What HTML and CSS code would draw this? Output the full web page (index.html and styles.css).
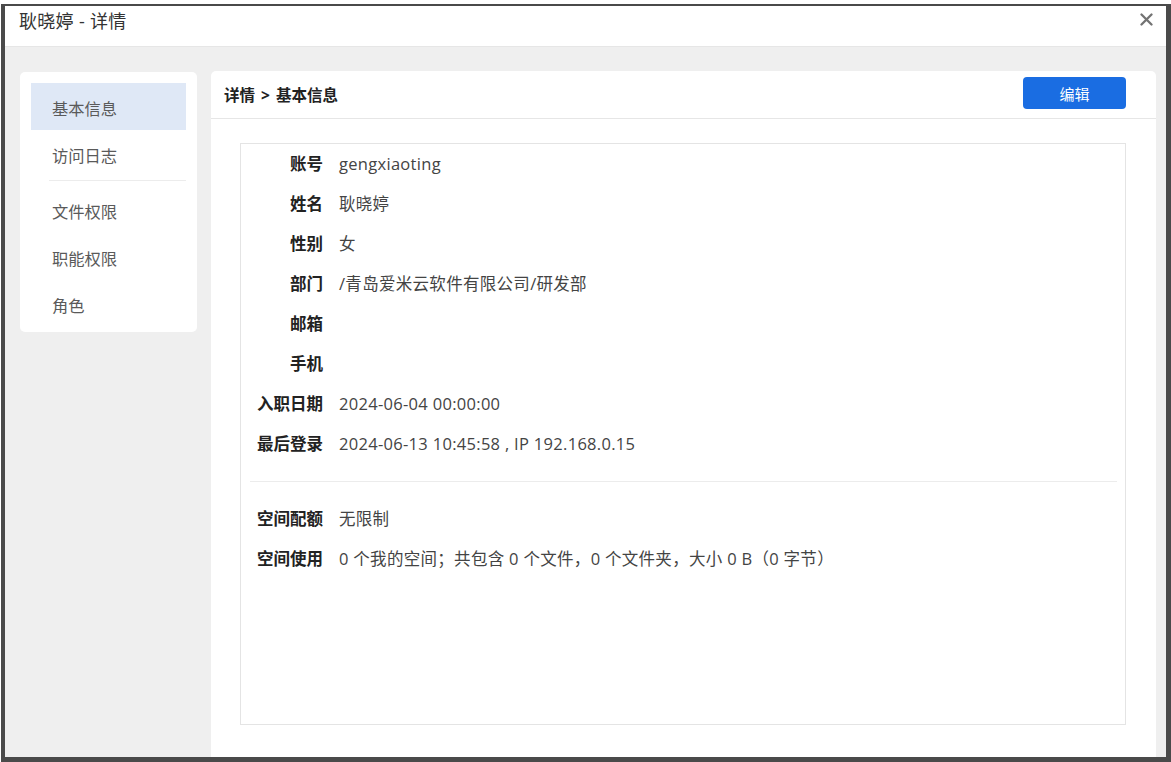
FILE: index.html
```html
<!DOCTYPE html>
<html lang="zh-CN">
<head>
<meta charset="utf-8">
<title>耿晓婷 - 详情</title>
<link rel="stylesheet" href="styles.css">
</head>
<body>
<div class="frame">
  <div class="dlg-head">
    <div class="dlg-title">耿晓婷 - 详情</div>
    <svg class="dlg-close" width="13" height="13" viewBox="0 0 13 13"><path d="M1.5 1.5 L11.5 11.5 M11.5 1.5 L1.5 11.5" stroke="#737373" stroke-width="2.3" stroke-linecap="round"/></svg>
  </div>
  <div class="dlg-body">
    <div class="side">
      <div class="nav-item active">基本信息</div>
      <div class="nav-item">访问日志</div>
      <div class="nav-sep"></div>
      <div class="nav-item">文件权限</div>
      <div class="nav-item">职能权限</div>
      <div class="nav-item">角色</div>
    </div>
    <div class="main">
      <div class="main-head">
        <div class="crumb">详情<span class="arrow">&gt;</span>基本信息</div>
        <button class="btn-edit">编辑</button>
      </div>
      <div class="info-box">
        <div class="row"><div class="lbl">账号</div><div class="val">gengxiaoting</div></div>
        <div class="row"><div class="lbl">姓名</div><div class="val">耿晓婷</div></div>
        <div class="row"><div class="lbl">性别</div><div class="val">女</div></div>
        <div class="row"><div class="lbl">部门</div><div class="val">/青岛爱米云软件有限公司/研发部</div></div>
        <div class="row"><div class="lbl">邮箱</div><div class="val"></div></div>
        <div class="row"><div class="lbl">手机</div><div class="val"></div></div>
        <div class="row"><div class="lbl">入职日期</div><div class="val">2024-06-04 00:00:00</div></div>
        <div class="row"><div class="lbl">最后登录</div><div class="val">2024-06-13 10:45:58 , IP 192.168.0.15</div></div>
        <div class="box-sep"></div>
        <div class="row"><div class="lbl">空间配额</div><div class="val">无限制</div></div>
        <div class="row"><div class="lbl">空间使用</div><div class="val">0 个我的空间；共包含 0 个文件，0 个文件夹，大小 0 B（0 字节）</div></div>
      </div>
    </div>
  </div>
</div>
</body>
</html>
```

FILE: styles.css
```css
* { box-sizing: border-box; }
html, body { margin: 0; padding: 0; background: #ffffff; }
body {
  font-family: "Open Sans", "Noto Sans CJK SC", sans-serif;
  color: #333;
}
.frame {
  margin: 4px 0 0 1px;
  width: 1170px;
  height: 758px;
  border-style: solid;
  border-color: #4a4a4a;
  border-width: 2px 5px 5px 4px;
  display: flex;
  flex-direction: column;
  background: #efefef;
}
.dlg-head {
  height: 41px;
  background: #fff;
  border-bottom: 1px solid #e6e6e6;
  display: flex;
  justify-content: space-between;
  align-items: flex-start;
  padding: 0 13px 0 14px;
}
.dlg-title {
  font-size: 18px;
  line-height: 30px;
  color: #333;
  letter-spacing: 0.3px;
}
.dlg-close { margin-top: 7px; }
.dlg-body {
  flex: 1;
  display: flex;
  align-items: flex-start;
  padding: 24px 10px 0 15px;
  gap: 14px;
  min-height: 0;
}
.side {
  width: 177px;
  margin-top: 1px;
  background: #fff;
  border-radius: 5px;
  padding: 11px 11px 5px 11px;
}
.nav-item {
  height: 47px;
  padding: 5px 0 0 21px;
  line-height: 42px;
  font-size: 16.3px;
  color: #5a5a5a;
}
.nav-item.active { background: #dfe8f6; }
.nav-sep {
  height: 1px;
  background: #ececec;
  margin: 3px 0 5px 18px;
}
.main {
  flex: 1;
  align-self: stretch;
  background: #fff;
  border-radius: 5px 5px 0 0;
  display: flex;
  flex-direction: column;
}
.main-head {
  height: 48px;
  border-bottom: 1px solid #e6e6e6;
  display: flex;
  justify-content: space-between;
  align-items: flex-start;
  padding: 0 30px 0 13px;
}
.crumb {
  font-size: 15.5px;
  font-weight: bold;
  color: #222;
  line-height: 47px;
  padding-top: 1px;
}
.crumb .arrow {
  font-weight: bold;
  margin: 0 6px;
}
.btn-edit {
  margin-top: 6px;
  width: 103px;
  height: 32px;
  border: none;
  border-radius: 4px;
  background: #1a6de2;
  color: #fff;
  font-family: "Open Sans", "Noto Sans CJK SC", sans-serif;
  font-size: 15px;
  padding: 0;
}
.info-box {
  flex: 1;
  margin: 24px 30px 32px 29px;
  border: 1px solid #e4e4e4;
}
.row {
  display: flex;
  height: 40px;
  padding-bottom: 2px;
  align-items: center;
  font-size: 16.5px;
}
.lbl {
  width: 82px;
  text-align: right;
  font-weight: bold;
  color: #222;
}
.val {
  margin-left: 16px;
  color: #444;
  letter-spacing: 0.3px;
}
.box-sep {
  height: 1px;
  background: #ececec;
  margin: 17px 8px 17px 9px;
}
```
